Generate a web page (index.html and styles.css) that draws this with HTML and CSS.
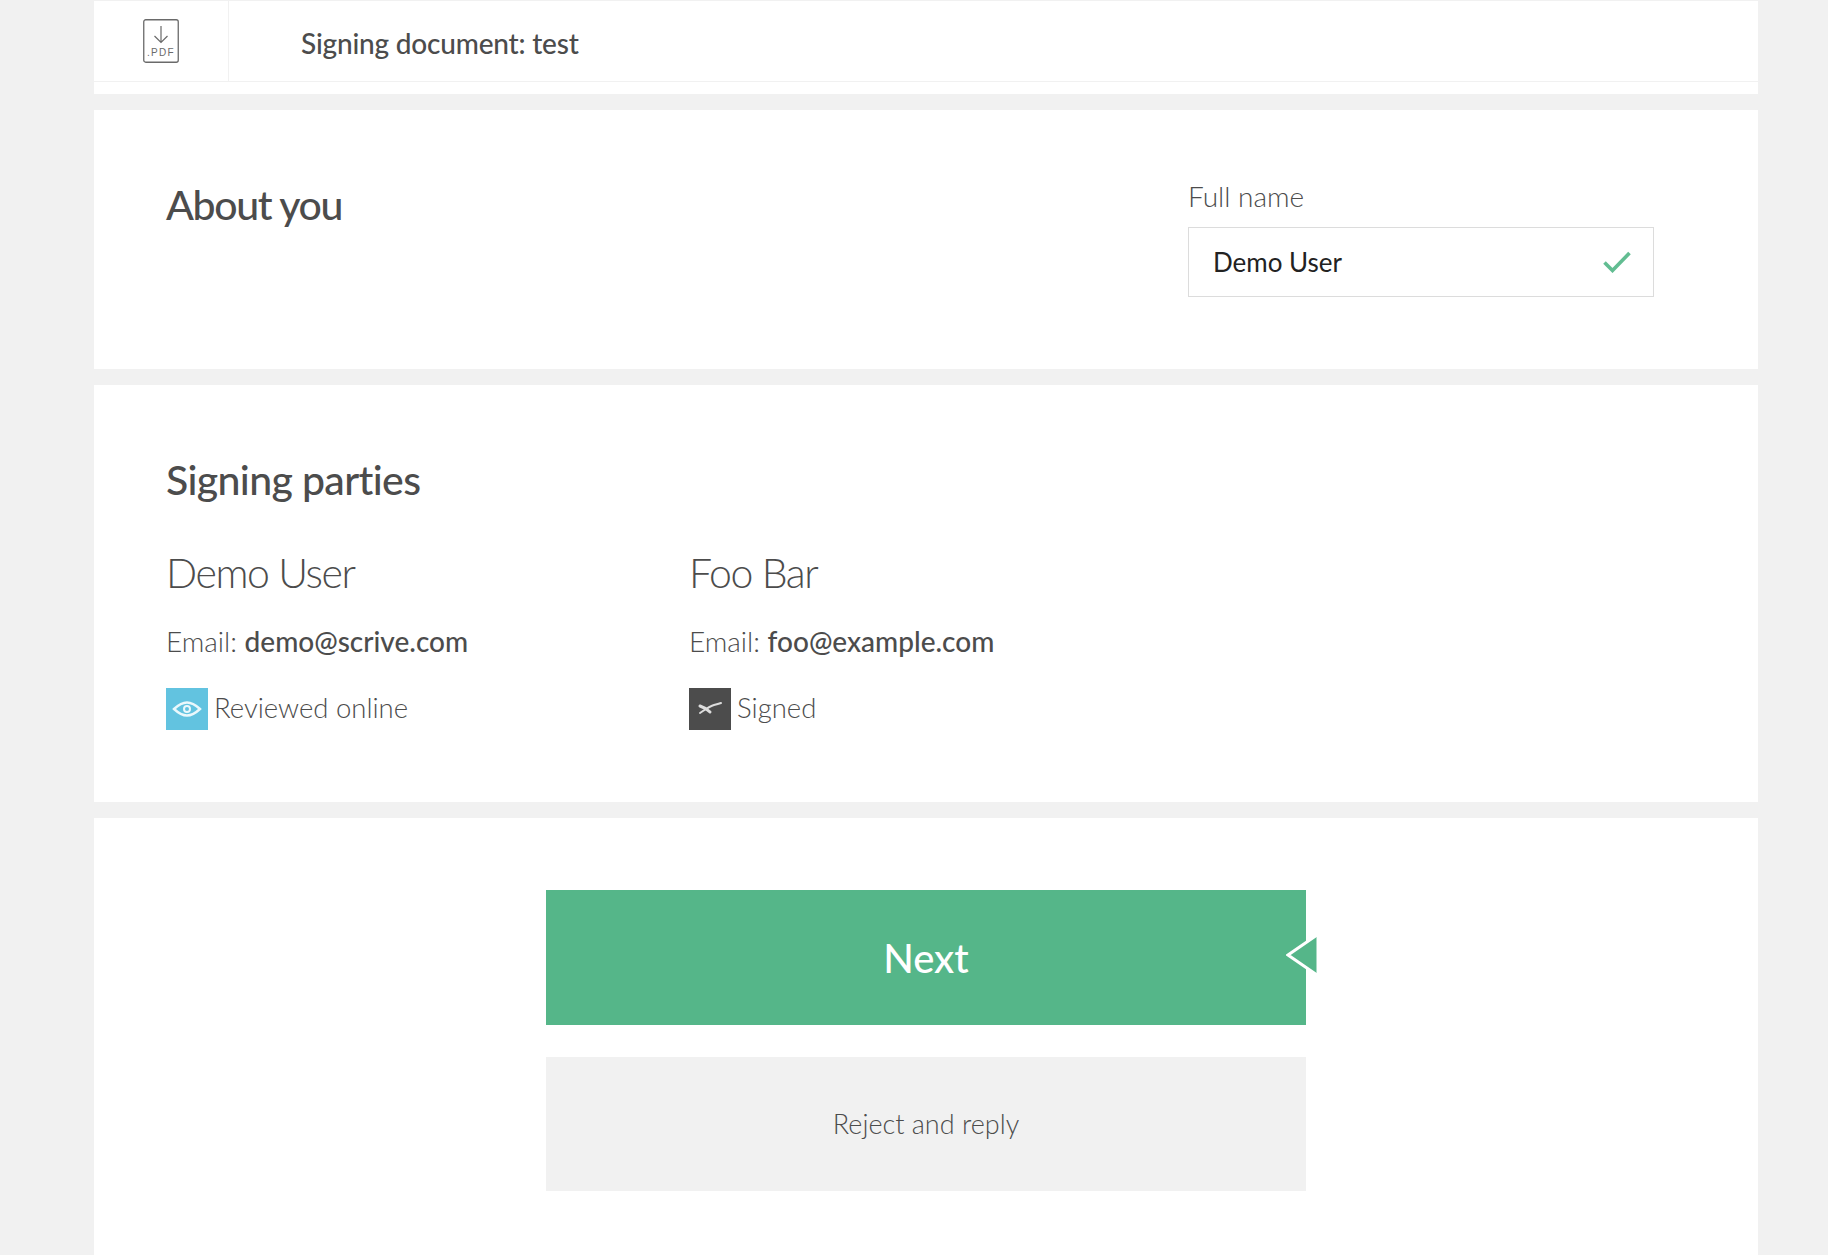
FILE: index.html
```html
<!DOCTYPE html>
<html lang="en">
<head>
    <meta charset="UTF-8">
    <title>Signing document: test</title>
    <link rel="stylesheet" href="styles.css">
</head>
<body>
    <div class="page">
        <div class="header-card">
            <div class="header">
                <div class="pdf-cell">
                    <svg class="pdf-icon" width="36" height="44" viewBox="0 0 36 44">
                        <rect x="0.75" y="0.75" width="34.5" height="42.5" rx="2" fill="none" stroke="#6a6a6a" stroke-width="1.3"/>
                        <path d="M18 7v16M11.5 17l6.500 6.500 6.500-6.500" fill="none" stroke="#6a6a6a" stroke-width="1.2"/>
                        <text x="18" y="37" class="pdf-label">.PDF</text>
                    </svg>
                </div>
                <div class="doc-title">Signing document: test</div>
            </div>
        </div>

        <section class="card about">
            <h2 class="card-title">About you</h2>
            <div class="field">
                <label class="field-label">Full name</label>
                <div class="field-input">
                    <span>Demo User</span>
                    <svg width="28" height="22" viewBox="0 0 28 22">
                        <path d="M1.500 11.500l8 8L26.500 2" fill="none" stroke="#62bd92" stroke-width="3.600"/>
                    </svg>
                </div>
            </div>
        </section>

        <section class="card parties">
            <h2 class="card-title">Signing parties</h2>
            <div class="party-list">
                <div class="party">
                    <h3 class="party-name">Demo User</h3>
                    <p class="party-email">Email: <strong>demo@scrive.com</strong></p>
                    <div class="party-status">
                        <span class="status-icon reviewed">
                            <svg width="30" height="18" viewBox="0 0 30 18">
                                <path d="M2 9C8 3.500 11 2.500 15 2.500s7 1 13 6.500c-6 5.500-9 6.500-13 6.500S8 14.500 2 9z" fill="none" stroke="#eaf8fc" stroke-width="2.400"/>
                                <circle cx="15" cy="9" r="3" fill="none" stroke="#eaf8fc" stroke-width="2"/>
                            </svg>
                        </span>
                        <span class="status-text">Reviewed online</span>
                    </div>
                </div>
                <div class="party">
                    <h3 class="party-name">Foo Bar</h3>
                    <p class="party-email">Email: <strong>foo@example.com</strong></p>
                    <div class="party-status">
                        <span class="status-icon signed">
                            <svg width="26" height="16" viewBox="0 0 26 16">
                                <path d="M3 5c3 1 7 3 10 6" fill="none" stroke="#dcdcdc" stroke-width="3" stroke-linecap="round"/>
                                <path d="M3 12C9 8 13 5 17 4c2-.5 4-1 7-2" fill="none" stroke="#dcdcdc" stroke-width="2" stroke-linecap="round"/>
                            </svg>
                        </span>
                        <span class="status-text">Signed</span>
                    </div>
                </div>
            </div>
        </section>

        <section class="card actions">
            <button class="btn btn-next">
                Next
                <svg class="next-arrow" width="32" height="42" viewBox="0 0 32 42">
                    <path d="M30.500 1.500V40.500L1.500 21z" fill="#55b689"/>
                    <path d="M31 1L2 21l29 20" fill="none" stroke="#fff" stroke-width="3"/>
                </svg>
            </button>
            <button class="btn btn-reject">Reject and reply</button>
        </section>
    </div>
</body>
</html>
```

FILE: styles.css
```css
html, body {
    margin: 0;
    height: 100%;
}
body {
    font-family: "Lato", "Open Sans", sans-serif;
    background-color: #f1f1f1;
    color: #4c4c4c;
    overflow: hidden;
}
.page {
    width: 1664px;
    margin-left: 94px;
    display: flex;
    flex-direction: column;
    gap: 16px;
    height: 1255px;
}
.header-card {
    background: white;
    height: 94px;
    box-sizing: border-box;
    border-top: 1px solid #f1f1f1;
}
.header {
    display: flex;
    align-items: center;
    height: 81px;
    border-bottom: 1px solid #f1f1f1;
    box-sizing: border-box;
}
.pdf-cell {
    width: 134px;
    height: 100%;
    border-right: 1px solid #f1f1f1;
    display: flex;
    align-items: center;
    justify-content: center;
}
.pdf-label {
    font-family: "Liberation Sans", sans-serif;
    font-size: 10px;
    letter-spacing: 1.3px;
    fill: #6a6a6a;
    text-anchor: middle;
}
.doc-title {
    margin-left: 72px;
    padding-top: 3px;
    font-size: 28px;
    font-weight: 500;
    letter-spacing: -0.2px;
}
.card {
    background: white;
    box-sizing: border-box;
}
.card-title {
    margin: 0;
    font-size: 41px;
    font-weight: 500;
    letter-spacing: -1.35px;
    line-height: 50px;
}
.about {
    height: 259px;
    padding: 70px 104px 0 72px;
    display: flex;
    justify-content: space-between;
    align-items: flex-start;
}
.field {
    width: 466px;
    margin-top: -1px;
}
.field-label {
    display: block;
    font-size: 28px;
    font-weight: 300;
    line-height: 34px;
    margin-bottom: 14px;
}
.field-input {
    height: 70px;
    box-sizing: border-box;
    border: 1px solid #dcdcdc;
    padding: 0 22px 0 24px;
    display: flex;
    align-items: center;
    justify-content: space-between;
    font-size: 26px;
    font-weight: 400;
    color: #222;
}
.parties {
    height: 417px;
    padding: 70px 72px 0;
}
.parties .card-title {
    letter-spacing: -0.65px;
}
.party-list {
    display: flex;
    margin-top: 43px;
}
.party {
    width: 523px;
}
.party-name {
    margin: 0;
    font-size: 41px;
    font-weight: 300;
    letter-spacing: -1.4px;
    line-height: 50px;
}
.party-email {
    margin: 26px 0 0;
    font-size: 28px;
    line-height: 34px;
    font-weight: 300;
}
.party-email strong {
    font-weight: 500;
}
.party-status {
    margin-top: 30px;
    display: flex;
    align-items: center;
    gap: 6px;
    font-size: 27.5px;
    font-weight: 300;
}
.status-text {
    margin-bottom: 3px;
}
.status-icon {
    width: 42px;
    height: 42px;
    display: flex;
    align-items: center;
    justify-content: center;
}
.status-icon.reviewed {
    background: #62c3e0;
}
.status-icon.signed {
    background: #4c4c4c;
}
.actions {
    flex: 1;
    padding-top: 72px;
    display: flex;
    flex-direction: column;
    align-items: center;
    gap: 32px;
}
.btn {
    display: block;
    width: 760px;
    border: none;
    font-family: inherit;
    position: relative;
}
.btn-next {
    height: 135px;
    background: #55b689;
    color: white;
    font-size: 40px;
    font-weight: 500;
}
.next-arrow {
    position: absolute;
    right: -12px;
    top: 44px;
}
.btn-reject {
    height: 134px;
    padding-bottom: 3px;
    background: #f1f1f1;
    color: #4c4c4c;
    font-size: 27px;
    font-weight: 300;
}
```
